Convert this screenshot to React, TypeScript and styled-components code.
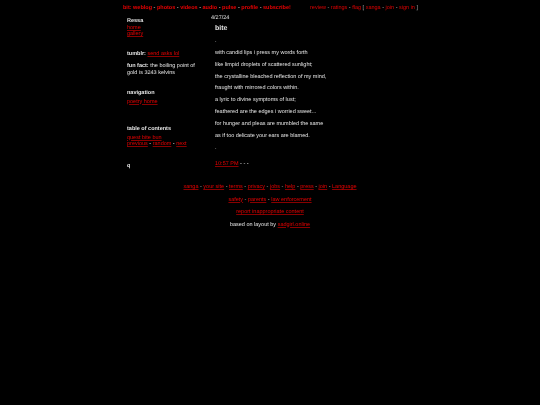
import React from "react";
import styled, { createGlobalStyle } from "styled-components";

const Global = createGlobalStyle`
  html, body { margin: 0; padding: 0; background: #000; }
  body { font-family: "Liberation Sans", Arial, sans-serif; font-size: 5.5px; line-height: 6.5px; color: #e4e4e4; text-rendering: geometricPrecision; }
  a { color: #e80000; text-decoration: underline; text-decoration-color: rgba(210, 0, 0, 0.65); text-underline-offset: 0.5px; }
`;
const Page = styled.div`width: 540px; height: 405px; background: #000; overflow: hidden; filter: blur(0.2px);`;
const TopBar = styled.div`
  display: flex; justify-content: space-between; width: 295px; margin: 0 0 0 123px; padding-top: 5px; height: 7px;
`;
const TopLeft = styled.div`font-weight: bold; color: #aaa; a { text-decoration: none; } `;
const TopRight = styled.div`color: #aaa; a { text-decoration: none; color: #e00000; }`;
const Columns = styled.div`display: flex; margin: 3px 0 0 127px;`;
const Side = styled.div`width: 84px; flex: none;`;
const Main = styled.div`flex: 1;`;
const Name = styled.div`font-weight: bold; margin-top: 3px;`;
const LinkStack = styled.div<{ $mt: number }>`margin-top: ${(p) => p.$mt}px; display: flex; flex-direction: column; line-height: 6.5px; a { width: fit-content; }`;
const Para = styled.div<{ $mt: number }>`margin-top: ${(p) => p.$mt}px;`;
const Heading = styled.div<{ $mt: number }>`font-weight: bold; margin-top: ${(p) => p.$mt}px;`;
const DateLine = styled.div``;
const Entry = styled.div`padding-left: 4px;`;
const Title = styled.div`font-weight: bold; font-size: 7px; margin-top: 3px; line-height: 8px;`;
const Line = styled.p`margin: 5.4px 0 0; height: 6.5px;`;
const Time = styled.div`margin-top: 10px; a { color: #f00000; }`;
const Footer = styled.div`margin-top: 15px; width: 540px; text-align: center;`;
const FootRow = styled.div`margin-bottom: 6px; color: #aaa; height: 6.5px;`;
const Based = styled.span`color: #e4e4e4;`;

export default function App() {
  return (
    <Page>
      <Global />
      <TopBar>
        <TopLeft><a href="#">bit:</a> <a href="#">weblog</a> - <a href="#">photos</a> - <a href="#">videos</a> - <a href="#">audio</a> - <a href="#">pulse</a> - <a href="#">profile</a> - <a href="#">subscribe!</a></TopLeft>
        <TopRight><a href="#">review</a> - <a href="#">ratings</a> - <a href="#">flag</a> [ <a href="#">xanga</a> - <a href="#">join</a> - <a href="#">sign in</a> ]</TopRight>
      </TopBar>
      <Columns>
        <Side>
          <Name>Ressa</Name>
          <LinkStack $mt={0}><a href="#">home</a><a href="#">gallery</a></LinkStack>
          <Para $mt={13}><b>tumblr:</b> <a href="#">send asks lol</a></Para>
          <Para $mt={6}><b>fun fact:</b> the boiling point of<br />gold is 3243 kelvins</Para>
          <Heading $mt={14}>navigation</Heading>
          <LinkStack $mt={2}><a href="#">poetry home</a></LinkStack>
          <Heading $mt={21}>table of contents</Heading>
          <LinkStack $mt={2}><a href="#">quest bite bun</a><span><a href="#">previous</a> - <a href="#">random</a> - <a href="#">next</a></span></LinkStack>
          <Heading $mt={15}>q</Heading>
        </Side>
        <Main>
          <DateLine>4/27/24</DateLine>
          <Entry>
            <Title>bite</Title>
            <Line>.</Line>
            <Line>with candid lips i press my words forth</Line>
            <Line>like limpid droplets of scattered sunlight;</Line>
            <Line>the crystalline bleached reflection of my mind,</Line>
            <Line>fraught with mirrored colors within.</Line>
            <Line>a lyric to divine symptoms of lust;</Line>
            <Line>feathered are the edges i worried sweet...</Line>
            <Line>for hunger and pleas are mumbled the same</Line>
            <Line>as if too delicate your ears are blamed.</Line>
            <Line>.</Line>
            <Time><a href="#">10:57 PM</a> - - -</Time>
          </Entry>
        </Main>
      </Columns>
      <Footer>
        <FootRow><a href="#">xanga</a> - <a href="#">your site</a> - <a href="#">terms</a> - <a href="#">privacy</a> - <a href="#">jobs</a> - <a href="#">help</a> - <a href="#">press</a> - <a href="#">join</a> - <a href="#">Language</a></FootRow>
        <FootRow><a href="#">safety</a> - <a href="#">parents</a> - <a href="#">law enforcement</a></FootRow>
        <FootRow><a href="#">report inappropriate content</a></FootRow>
        <FootRow><Based>based on layout by</Based> <a href="#">sadgirl.online</a></FootRow>
      </Footer>
    </Page>
  );
}
